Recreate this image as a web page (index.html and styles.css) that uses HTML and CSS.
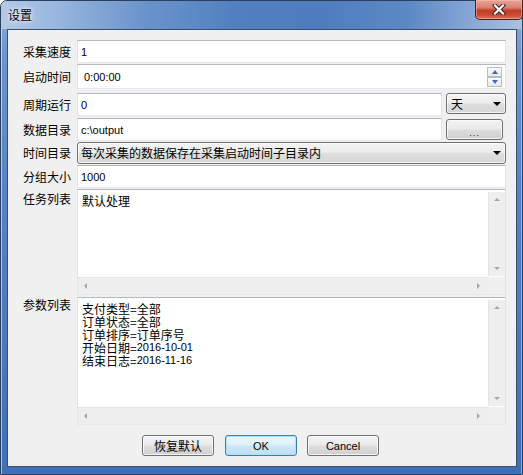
FILE: index.html
```html
<!DOCTYPE html>
<html lang="zh-CN">
<head>
<meta charset="utf-8">
<title>设置</title>
<link rel="stylesheet" href="styles.css">
</head>
<body>
<div class="window">
  <div class="titlebar">
    <span class="title">设置</span>
    <div class="close">
      <svg width="14" height="11" viewBox="0 0 14 11">
        <path d="M3 1.5 L11 9.5 M11 1.5 L3 9.5" stroke="#3a2320" stroke-width="4.2" stroke-linecap="square" fill="none"/>
        <path d="M3 1.5 L11 9.5 M11 1.5 L3 9.5" stroke="#ffffff" stroke-width="2.2" stroke-linecap="square" fill="none"/>
      </svg>
    </div>
  </div>
  <div class="client">
    <div class="row r1">
      <span class="lbl">采集速度</span>
      <div class="input"><span class="lat">1</span></div>
    </div>
    <div class="row r2">
      <span class="lbl">启动时间</span>
      <div class="input spin-input"><span class="lat time">0:00:00</span>
        <div class="spinner">
          <div class="spin-btn"><span class="tri-up"></span></div>
          <div class="spin-btn"><span class="tri-down"></span></div>
        </div>
      </div>
    </div>
    <div class="row r3">
      <span class="lbl">周期运行</span>
      <div class="input"><span class="lat">0</span></div>
      <div class="combo small-combo"><span class="combo-text">天</span><span class="arrow"></span></div>
    </div>
    <div class="row r4">
      <span class="lbl">数据目录</span>
      <div class="input"><span class="lat">c:\output</span></div>
      <div class="btn browse"><span class="dots">...</span></div>
    </div>
    <div class="row r5">
      <span class="lbl">时间目录</span>
      <div class="combo wide-combo"><span class="combo-text">每次采集的数据保存在采集启动时间子目录内</span><span class="arrow"></span></div>
    </div>
    <div class="row r6">
      <span class="lbl">分组大小</span>
      <div class="input"><span class="lat">1000</span></div>
    </div>
    <div class="row area-row r7">
      <span class="lbl lbl-top1">任务列表</span>
      <div class="textbox tasks">
        <div class="text-content task-text">默认处理</div>
        <div class="vscroll"><span class="s-up"></span><span class="s-down"></span></div>
        <div class="hscroll"><span class="s-left"></span><span class="s-right"></span></div>
        <div class="corner"></div>
      </div>
    </div>
    <div class="row area-row r8">
      <span class="lbl lbl-top2">参数列表</span>
      <div class="textbox params">
        <div class="text-content param-text">
          <div class="pline">支付类型=全部</div>
          <div class="pline">订单状态=全部</div>
          <div class="pline">订单排序=订单序号</div>
          <div class="pline">开始日期=<span class="lat">2016-10-01</span></div>
          <div class="pline">结束日志=<span class="lat">2016-11-16</span></div>
        </div>
        <div class="vscroll"><span class="s-up"></span><span class="s-down"></span></div>
        <div class="hscroll"><span class="s-left"></span><span class="s-right"></span></div>
        <div class="corner"></div>
      </div>
    </div>
    <div class="buttons">
      <div class="btn push">恢复默认</div>
      <div class="btn push default"><span class="lat">OK</span></div>
      <div class="btn push"><span class="lat">Cancel</span></div>
    </div>
  </div>
</div>
</body>
</html>
```

FILE: styles.css
```css
html, body {
  margin: 0;
  padding: 0;
}
body {
  width: 523px;
  height: 475px;
  overflow: hidden;
  background: #ffffff;
  font-family: "Noto Sans CJK SC", "Liberation Sans", sans-serif;
  font-size: 12px;
  color: #000;
}
.window {
  position: relative;
  width: 523px;
  height: 475px;
  box-sizing: border-box;
  border: 1px solid #2b3f5e;
  border-radius: 7px 7px 0 0;
  background: linear-gradient(to bottom, #8eaedb 0%, #6d95cd 12%, #5583c4 40%, #3f6fb7 100%);
  box-shadow: inset 1px 1px 0 rgba(255,255,255,0.55), inset -1px 0 0 rgba(255,255,255,0.35);
  display: flex;
  flex-direction: column;
  padding: 0 5px 7px 6px;
}
.titlebar {
  position: relative;
  height: 28px;
  flex: none;
  display: flex;
  align-items: center;
  margin: 0 -5px 0 -6px;
  padding: 0 5px 0 6px;
  border-radius: 6px 6px 0 0;
  background: linear-gradient(to right, #b3c9e7 0%, #9ab7df 10%, #6a93cb 28%, #5180c1 45%, #4e7dbf 62%, #5d88c6 78%, #8dacd8 92%, #a9c1e3 100%);
}
.title {
  margin-left: 1px;
  margin-top: -1px;
  font-size: 12px;
  line-height: 14px;
  color: #000;
  text-shadow: 0 0 4px #dfe9f6, 0 0 6px #dfe9f6, 0 0 2px #eef3fa;
}
.close {
  position: absolute;
  right: -1px;
  top: -1px;
  width: 48px;
  height: 20px;
  box-sizing: border-box;
  border: 1px solid #4b1f1a;
  border-top: none;
  border-radius: 0 0 5px 5px;
  background: linear-gradient(to bottom, #e7a596 0%, #d98070 40%, #c33c27 55%, #c94a33 80%, #dc7a5f 100%);
  box-shadow: inset 0 0 0 1px rgba(255,200,190,0.45);
  display: flex;
  align-items: center;
  justify-content: center;
}
.close svg {
  display: block;
}
.client {
  flex: 1;
  box-sizing: border-box;
  border: 1px solid #3a4f6b;
  background: #f0f0f0;
  padding: 10px 10px 0 15px;
  display: flex;
  flex-direction: column;
}
.row {
  display: flex;
  align-items: center;
  flex: none;
}
.lbl {
  width: 54px;
  flex: none;
  font-size: 12px;
  line-height: 14px;
  white-space: nowrap;
}
.lat {
  font-family: "Liberation Sans", Arial, sans-serif;
  font-size: 11px;
}
.input {
  flex: 1;
  align-self: stretch;
  box-sizing: border-box;
  background: #fff;
  border: 1px solid;
  border-color: #b4b7be #e0e3ea #e6eaf0 #e0e3ea;
  display: flex;
  align-items: center;
  padding-left: 3px;
  position: relative;
}
.r1 { height: 23px; }
.r2 { height: 25px; margin-top: 1px; }
.r3 { height: 23px; margin-top: 4px; }
.r4 { height: 23px; margin-top: 2px; }
.r5 { height: 21px; margin-top: 1px; }
.r6 { height: 23px; margin-top: 2px; }
.r7 { height: 106px; margin-top: 1px; }
.r8 { height: 128px; margin-top: 2px; }

.time {
  margin-left: 3px;
}
.spinner {
  position: absolute;
  right: 3px;
  top: 2px;
  display: flex;
  flex-direction: column;
}
.spin-btn {
  width: 15px;
  height: 10px;
  box-sizing: border-box;
  border: 1px solid #b8bcc4;
  background: linear-gradient(to bottom, #fbfbfb, #e8e8ea);
  display: flex;
  align-items: center;
  justify-content: center;
}
.tri-up {
  width: 0; height: 0;
  border-left: 3.5px solid transparent;
  border-right: 3.5px solid transparent;
  border-bottom: 4px solid #4a64b8;
}
.tri-down {
  width: 0; height: 0;
  border-left: 3.5px solid transparent;
  border-right: 3.5px solid transparent;
  border-top: 4px solid #4a64b8;
}
.combo {
  box-sizing: border-box;
  border: 1px solid #707070;
  border-radius: 3px;
  background: linear-gradient(to bottom, #f4f4f4 0%, #ececec 45%, #dedede 55%, #d6d6d6 100%);
  box-shadow: inset 0 0 0 1px rgba(255,255,255,0.7);
  display: flex;
  align-items: center;
  position: relative;
}
.combo-text {
  font-size: 12px;
  line-height: 14px;
  white-space: nowrap;
}
.arrow {
  position: absolute;
  right: 4px;
  top: 50%;
  margin-top: -2px;
  width: 0; height: 0;
  border-left: 4px solid transparent;
  border-right: 4px solid transparent;
  border-top: 4px solid #000;
}
.small-combo {
  width: 60px;
  height: 21px;
  margin-left: 4px;
  align-self: flex-start;
  padding-left: 4px;
}
.wide-combo {
  flex: 1;
  height: 22px;
  align-self: stretch;
  padding-left: 3px;
}
.btn {
  box-sizing: border-box;
  border: 1px solid #707070;
  border-radius: 3px;
  background: linear-gradient(to bottom, #f2f2f2 0%, #ebebeb 45%, #dddddd 55%, #cfcfcf 100%);
  box-shadow: inset 0 0 0 1px rgba(255,255,255,0.75);
  display: flex;
  align-items: center;
  justify-content: center;
}
.browse {
  width: 57px;
  height: 21px;
  margin-left: 4px;
  margin-right: 3px;
  align-self: center;
}
.dots {
  font-family: "Liberation Sans", Arial, sans-serif;
  font-size: 9px;
  letter-spacing: 1px;
  margin-top: 6px;
  color: #222;
}
.area-row {
  align-items: flex-start;
}
.lbl-top1 { margin-top: 3px; }
.lbl-top2 { margin-top: 1px; }
.textbox {
  flex: 1;
  align-self: stretch;
  box-sizing: border-box;
  background: #fff;
  border: 1px solid;
  border-color: #b4b7be #e0e3ea #e6eaf0 #e0e3ea;
  display: grid;
  grid-template-columns: 1fr 17px;
  grid-template-rows: 1fr 17px;
  min-height: 0;
}
.text-content {
  padding: 3px 4px;
  font-size: 12px;
  line-height: 13px;
  overflow: hidden;
}
.task-text {
  padding-top: 4px;
  line-height: 14px;
}
.param-text {
  padding-top: 4px;
}
.pline {
  height: 13px;
  line-height: 13px;
  white-space: nowrap;
}
.pline .lat {
  line-height: 13px;
  vertical-align: top;
}
.vscroll {
  position: relative;
  margin-top: 2px;
  margin-bottom: 1px;
  background: #eeeeee;
  border-left: 1px solid #e4e4e4;
}
.hscroll {
  position: relative;
  background: #eeeeee;
  border-top: 1px solid #e4e4e4;
}
.corner {
  background: #f0f0f0;
}
.s-up, .s-down, .s-left, .s-right {
  position: absolute;
  width: 0; height: 0;
}
.s-up {
  top: 6px; left: 5px;
  border-left: 3.5px solid transparent;
  border-right: 3.5px solid transparent;
  border-bottom: 3px solid #a6a6a6;
}
.s-down {
  bottom: 6px; left: 5px;
  border-left: 3.5px solid transparent;
  border-right: 3.5px solid transparent;
  border-top: 3px solid #a6a6a6;
}
.s-left {
  left: 6px; top: 5px;
  border-top: 3.5px solid transparent;
  border-bottom: 3.5px solid transparent;
  border-right: 3px solid #a6a6a6;
}
.s-right {
  right: 8px; top: 5px;
  border-top: 3.5px solid transparent;
  border-bottom: 3.5px solid transparent;
  border-left: 3px solid #a6a6a6;
}
.buttons {
  display: flex;
  margin-top: 10px;
  padding-left: 119px;
  flex: none;
}
.push {
  width: 72px;
  height: 21px;
  font-size: 12px;
  line-height: 14px;
}
.push + .push {
  margin-left: 11px;
}
.push.default + .push {
  margin-left: 10px;
}
.push.default {
  border-color: #3c7fb1;
  box-shadow: inset 0 0 0 1px #a8e3f7;
  background: linear-gradient(to bottom, #eaf6fd 0%, #e0f0fb 45%, #cde6f7 55%, #c0dff4 100%);
}
```
